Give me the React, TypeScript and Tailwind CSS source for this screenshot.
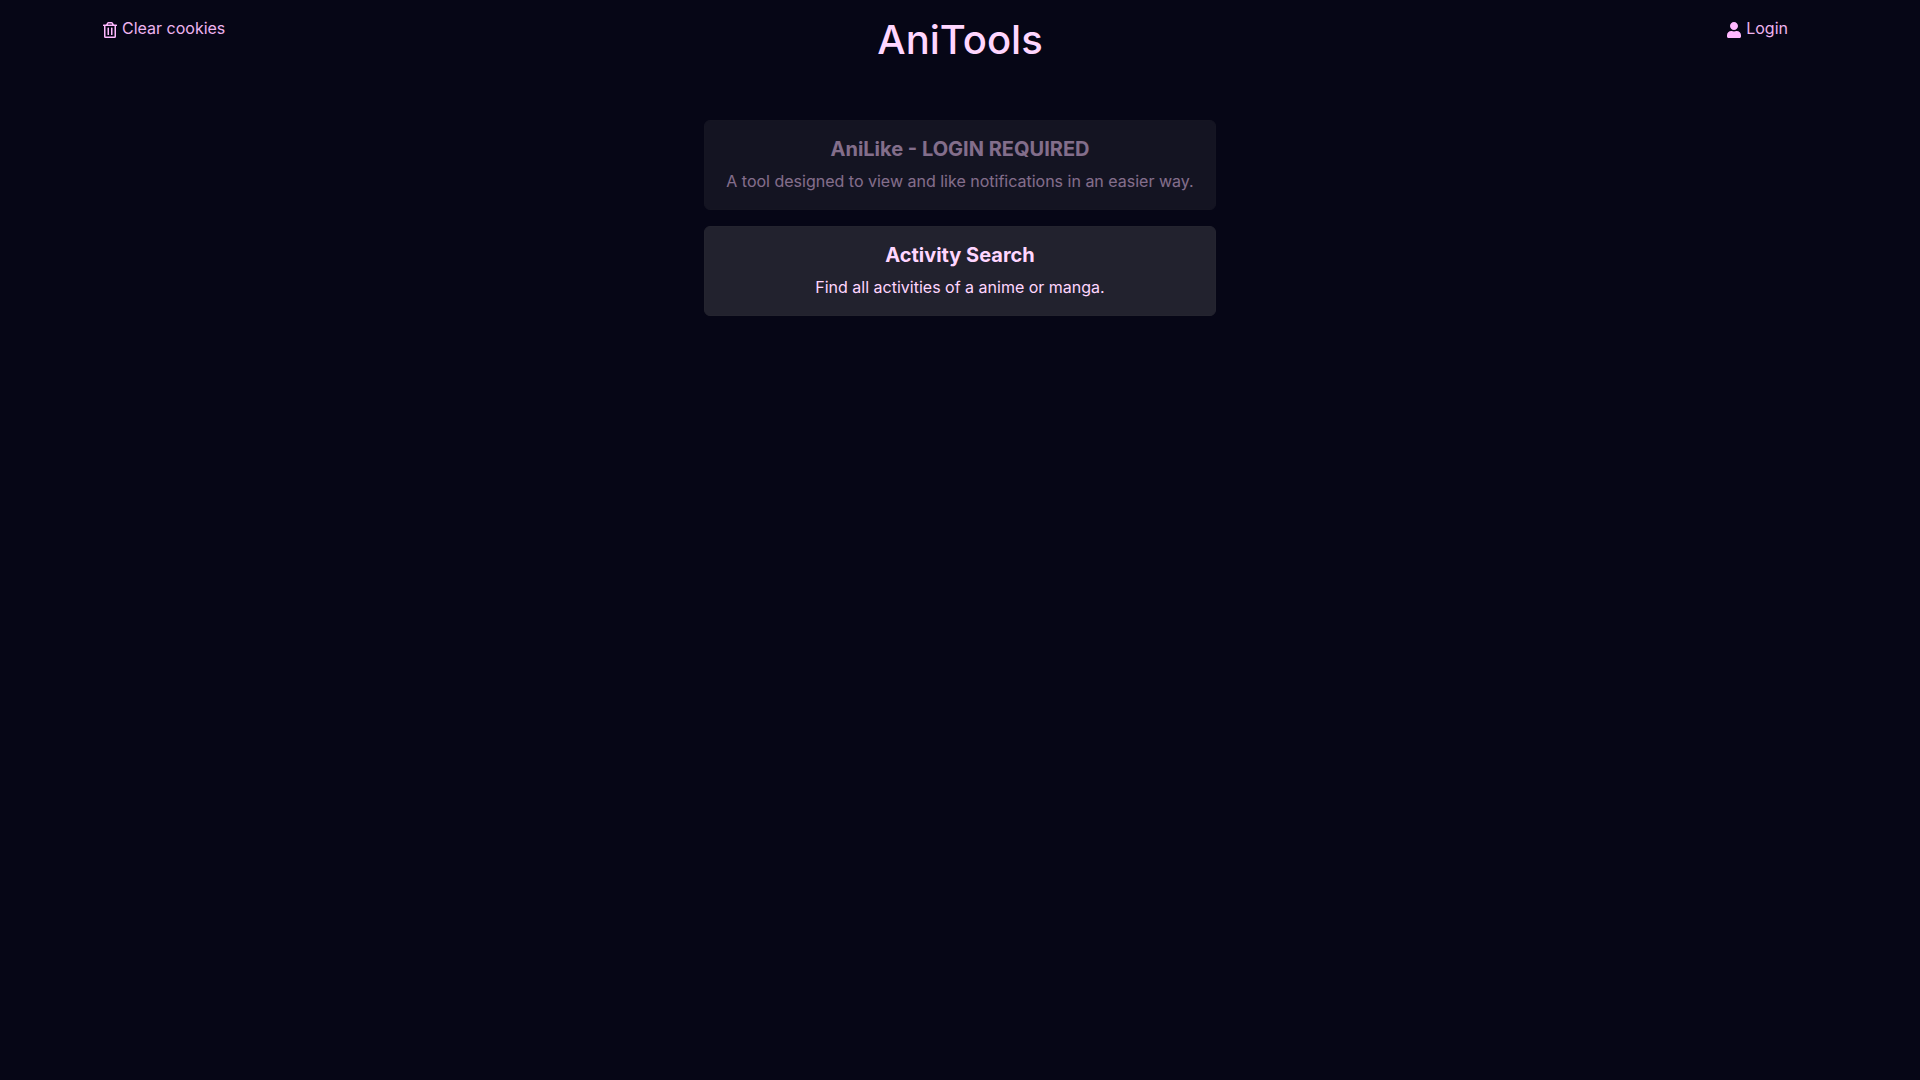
import { FaRegTrashAlt, FaUser } from "react-icons/fa";

export default function App() {
  return (
    <div className="min-h-screen bg-[#060616] font-['Inter',sans-serif] text-base text-[#ffd6ff]">
      <header className="grid grid-cols-3 px-24 pt-4">
        <div className="pl-[7px]">
          <button type="button" className="inline-flex items-center gap-[5px] text-[#ffb8ff]">
            <FaRegTrashAlt aria-hidden="true" className="mt-1 h-4 w-3.5" />
            <span className="text-[#eeb4f0]">Clear cookies</span>
          </button>
        </div>
        <h1 className="text-center text-[40px] leading-12 font-medium">AniTools</h1>
        <div className="pr-9 text-right">
          <a href="#login" className="inline-flex items-center gap-[5px] text-[#ffb8ff]">
            <FaUser aria-hidden="true" className="mt-1 h-4 w-3.5" />
            <span className="text-[#eeb4f0]">Login</span>
          </a>
        </div>
      </header>
      <main className="mx-auto mt-14 flex w-full max-w-lg flex-col gap-4 text-center">
        <button type="button" disabled className="rounded-md border border-[#24242f] bg-[#22222e] p-4 opacity-50">
          <h2 className="text-xl leading-6 font-bold">AniLike - LOGIN REQUIRED</h2>
          <p className="mt-2">A tool designed to view and like notifications in an easier way.</p>
        </button>
        <a href="#search" className="rounded-md border border-[#24242f] bg-[#22222e] p-4">
          <h2 className="text-xl leading-6 font-bold">Activity Search</h2>
          <p className="mt-2">Find all activities of a anime or manga.</p>
        </a>
      </main>
    </div>
  );
}
